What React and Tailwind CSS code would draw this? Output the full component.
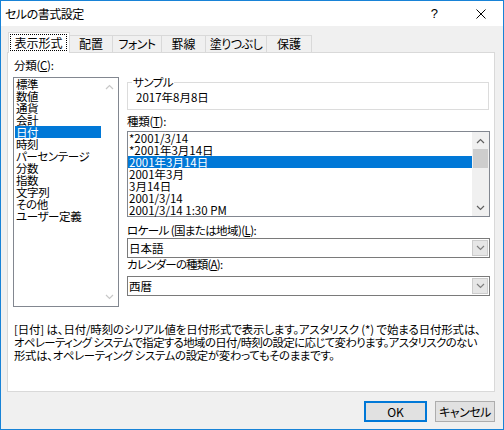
import React from "react";

function Chev({ dir = "down", color = "#606060" }) {
  return (
    <svg width="9" height="6" viewBox="0 0 9 6">
      <polyline
        points={dir === "down" ? "1,1 4.5,4.5 8,1" : "1,5 4.5,1.5 8,5"}
        fill="none"
        stroke={color}
        strokeWidth="1.2"
      />
    </svg>
  );
}

function Tab({ className, children }) {
  return (
    <div className={"h-[17px] border-t border-r border-[#d9d9d9] bg-[#f0f0f0] flex items-center justify-center " + className}>
      {children}
    </div>
  );
}

function Combo({ children }) {
  return (
    <div className="h-[20px] border border-[#7a7a7a] bg-white flex items-center">
      <div className="flex-1 pl-[1px]">{children}</div>
      <div className="w-[16px] h-[16px] mr-[1px] bg-[#e6e6e6] border border-[#cccccc] flex items-center justify-center">
        <Chev dir="down" color="#808080" />
      </div>
    </div>
  );
}

const cats = ["標準", "数値", "通貨", "会計", "日付", "時刻", "パーセンテージ", "分数", "指数", "文字列", "その他", "ユーザー定義"];
const types = ["*2001/3/14", "*2001年3月14日", "2001年3月14日", "2001年3月", "3月14日", "2001/3/14", "2001/3/14 1:30 PM"];

export default function App() {
  return (
    <div className="w-[504px] h-[430px] border border-[#1883d7] bg-[#f0f0f0] flex flex-col text-black font-['Noto_Sans_CJK_JP',sans-serif] [font-feature-settings:'palt'] text-[12px] leading-[12px] overflow-hidden">
      {/* title bar */}
      <div className="h-[25px] bg-white flex items-center shrink-0">
        <span className="pl-[4px] tracking-[-0.5px]">セルの書式設定</span>
        <div className="flex-1" />
        <span className="font-['Liberation_Sans',sans-serif] text-[13px] mr-[38px]">?</span>
        <svg width="10" height="10" viewBox="0 0 10 10" className="mr-[17px]">
          <line x1="0.5" y1="0.5" x2="9.5" y2="9.5" stroke="#000" strokeWidth="1" />
          <line x1="9.5" y1="0.5" x2="0.5" y2="9.5" stroke="#000" strokeWidth="1" />
        </svg>
      </div>

      {/* tabs */}
      <div className="ml-[6px] mt-[6px] h-[20px] flex items-end pl-[1px] shrink-0">
        <div className="relative z-10 -mb-px h-[21px] w-[62px] bg-white border border-b-0 border-[#d9d9d9] pt-[1px] pl-[1px] pr-[2px]">
          <div className="h-[17px] border border-dotted border-black flex items-center justify-center">表示形式</div>
        </div>
        <Tab className="w-[43px]">配置</Tab>
        <Tab className="w-[49px] tracking-[-0.5px]">フォント</Tab>
        <Tab className="w-[44px]">罫線</Tab>
        <Tab className="w-[61px] tracking-[-0.5px]">塗りつぶし</Tab>
        <Tab className="w-[45px]">保護</Tab>
      </div>

      {/* panel */}
      <div className="ml-[6px] w-[488px] h-[340px] bg-white border border-[#d9d9d9] flex flex-col shrink-0 text-[11.5px]">
        <div className="flex">
          {/* left column */}
          <div className="ml-[5px] w-[106px]">
            <div className="h-[24px] flex items-center pl-[1px] tracking-[-0.3px]">
              分類(<span className="underline">C</span>):
            </div>
            <div className="h-[230px] border border-[#828790] flex">
              <div className="flex-1 pl-[1px]">
                {cats.map((c) => (
                  <div
                    key={c}
                    className={
                      "h-[12px] leading-[12px] pl-[1px] whitespace-nowrap tracking-[-0.4px] " +
                      (c === "日付" ? "bg-[#0078d7] text-white" : "")
                    }
                  >
                    {c}
                  </div>
                ))}
              </div>
              <div className="w-[17px] flex flex-col items-center justify-between py-[6px]">
                <Chev dir="up" color="#c8c8c8" />
                <Chev dir="down" color="#c8c8c8" />
              </div>
            </div>
          </div>

          {/* right column */}
          <div className="ml-[8px] w-[363px]">
            <fieldset className="mt-[23px] w-[362px] border border-[#dcdcdc]">
              <legend className="ml-[4px] px-[1px] leading-[12px] tracking-[-0.5px]">サンプル</legend>
              <div className="h-[21px] flex items-center pb-[3px] pl-[8px]">2017年8月8日</div>
            </fieldset>
            <div className="h-[21px] flex items-center tracking-[-0.3px]">
              種類(<span className="underline">T</span>):
            </div>
            <div className="h-[86px] border border-[#828790] bg-white flex">
              <div className="flex-1">
                {types.map((t, i) => (
                  <div
                    key={i}
                    className={
                      "h-[12px] leading-[12px] pl-[1px] whitespace-nowrap " +
                      (i === 2 ? "bg-[#0078d7] text-white" : "")
                    }
                  >
                    {t}
                  </div>
                ))}
              </div>
              <div className="w-[17px] bg-[#f0f0f0] flex flex-col">
                <div className="h-[17px] flex items-center justify-center">
                  <Chev dir="up" color="#606060" />
                </div>
                <div className="h-[19px] mx-[1px] bg-[#cdcdcd]" />
                <div className="flex-1" />
                <div className="h-[17px] flex items-center justify-center">
                  <Chev dir="down" color="#606060" />
                </div>
              </div>
            </div>
            <div className="h-[21px] flex items-end pb-[2px] tracking-[-0.6px]">
              ロケール (国または地域)(<span className="underline">L</span>):
            </div>
            <Combo>日本語</Combo>
            <div className="h-[18px] flex items-start tracking-[-0.8px]">
              カレンダーの種類(<span className="underline">A</span>):
            </div>
            <Combo>西暦</Combo>
          </div>
        </div>

        <div className="mt-[16px] pl-[6px] leading-[13px] whitespace-nowrap text-[11.4px]">
          <div className="tracking-[-0.1px]">[日付] は、日付/時刻のシリアル値を日付形式で表示します。アスタリスク (*) で始まる日付形式は、</div>
          <div className="tracking-[-0.6px]">オペレーティング システムで指定する地域の日付/時刻の設定に応じて変わります。アスタリスクのない</div>
          <div className="tracking-[-0.3px]">形式は、オペレーティング システムの設定が変わってもそのままです。</div>
        </div>
      </div>

      {/* buttons */}
      <div className="mt-[9px] flex justify-end gap-[8px] pr-[8px] shrink-0">
        <button className="w-[63px] h-[21px] border-2 border-[#0078d7] bg-[#e1e1e1] flex items-center justify-center">
          OK
        </button>
        <button className="w-[60px] h-[21px] border border-[#adadad] bg-[#e1e1e1] flex items-center justify-center tracking-[-0.5px]">
          キャンセル
        </button>
      </div>
    </div>
  );
}
